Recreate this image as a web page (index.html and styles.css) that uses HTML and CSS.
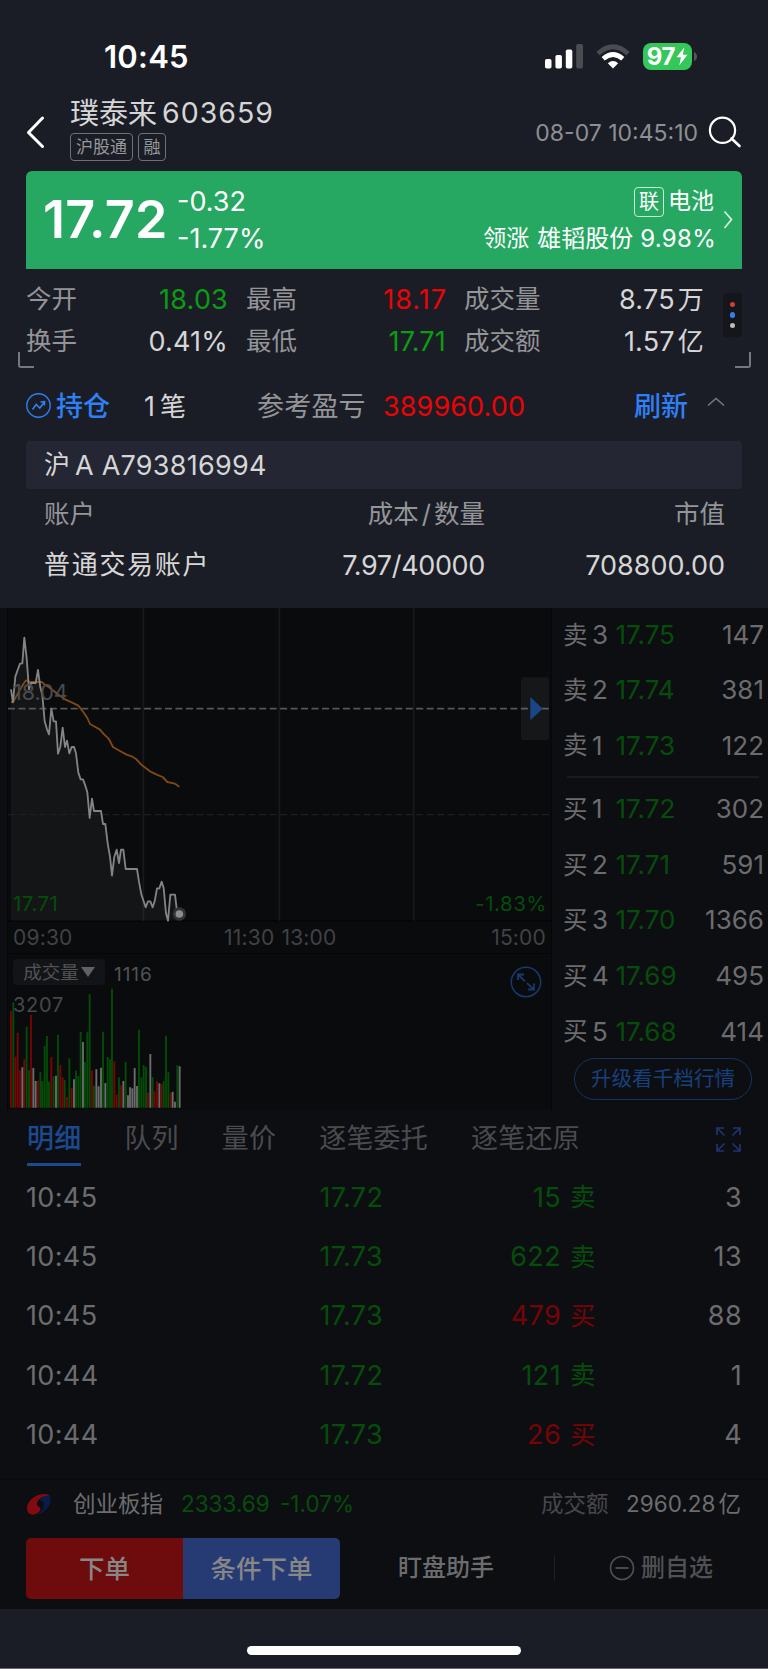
FILE: index.html
```html
<!DOCTYPE html>
<html lang="zh-CN">
<head>
<meta charset="utf-8">
<title>璞泰来 603659</title>
<link rel="stylesheet" href="styles.css">
</head>
<body>
<div class="status">
  <span class="clock">10:45</span>
  <span class="status-icons">
    <svg class="signal" width="38" height="25" viewBox="0 0 38 25"><rect x="0" y="15" width="6.5" height="9.5" rx="1.8" fill="#fff"/><rect x="10.4" y="11" width="6.5" height="13.5" rx="1.8" fill="#fff"/><rect x="20.8" y="5.5" width="6.5" height="19" rx="1.8" fill="#fff"/><rect x="31.2" y="0" width="6.8" height="24.5" rx="1.8" fill="#4b4c52"/></svg>
    <svg class="wifi" width="34" height="25" viewBox="0 0 34 25"><path d="M2 9.5Q17-4 32 9.5" fill="none" stroke="#4b4c52" stroke-width="4.6"/><path d="M7.2 14.8Q17 6.2 26.800 14.800" fill="none" stroke="#fff" stroke-width="4.600"/><path d="M11.800 19.200Q17 14.600 22.200 19.200L17 24.500Z" fill="#fff"/></svg>
    <span class="battery"><span class="level">97</span><svg width="12" height="19" viewBox="0 0 12 19"><path d="M8.200 0.500L0.500 10.200H5L3.200 18.500L11.500 7.800H6.800Z" fill="#fff"/></svg></span>
    <svg class="nub" width="3" height="9" viewBox="0 0 3 9"><path d="M0 0Q3 1.500 3 4.500T0 9Z" fill="#55565c"/></svg>
  </span>
</div>

<header class="head">
  <svg class="back" width="20" height="34" viewBox="0 0 20 34"><path d="M16.500 2L2.500 16.500L16.500 30.500" fill="none" stroke="#fff" stroke-width="3" stroke-linecap="round" stroke-linejoin="round"/></svg>
  <div class="stock">
    <div class="stock-name"><span class="cn">璞泰来</span><span class="code">603659</span></div>
    <div class="tags"><span class="tag wide">沪股通</span><span class="tag">融</span></div>
  </div>
  <span class="stamp">08-07 10:45:10</span>
  <svg class="search" width="34" height="32" viewBox="0 0 34 32"><circle cx="14.500" cy="14.300" r="12.600" fill="none" stroke="#fff" stroke-width="2.200"/><path d="M23.500 22.500L31.500 30" stroke="#fff" stroke-width="2.600" stroke-linecap="round"/></svg>
</header>

<section class="card">
  <span class="last">17.72</span>
  <div class="delta"><span>-0.32</span><span>-1.77%</span></div>
  <div class="sector">
    <div class="sector-top"><span class="lian">联</span><span>电池</span></div>
    <div class="sector-lead"><span class="w1">领涨</span><span class="w2">雄韬股份</span><span class="w3">9.98%</span></div>
  </div>
  <svg class="chev" width="10" height="20" viewBox="0 0 10 20"><path d="M1.500 1.500L8.500 9.500L1.500 18" fill="none" stroke="#d9f1e3" stroke-width="1.700"/></svg>
</section>

<section class="quotes">
  <div class="quote-grid">
    <span class="lab">今开</span><span class="val green">18.03</span><span class="lab">最高</span><span class="val red s17">18.17</span><span class="lab">成交量</span><span class="val">8.75<i class="unit">万</i></span>
    <span class="lab">换手</span><span class="val">0.41%</span><span class="lab">最低</span><span class="val green">17.71</span><span class="lab">成交额</span><span class="val">1.57<i class="unit">亿</i></span>
  </div>
  <div class="dots"><b class="d1"></b><b class="d2"></b><b class="d3"></b></div>
  <span class="corner left"></span><span class="corner right"></span>
</section>

<section class="position">
  <div class="pos-row">
    <svg width="26" height="26" viewBox="0 0 26 26" fill="none" stroke="#2f80f7"><circle cx="12.500" cy="12.500" r="11.700" stroke-width="1.400"/><path d="M6.500 16.500L10.200 11.500L13.800 15L18 9.500M14.500 9L18.600 8.600L18.300 12.500" stroke-width="1.500"/></svg>
    <span class="hold">持仓</span>
    <span class="count">1<i>笔</i></span>
    <span class="pl">参考盈亏</span>
    <span class="pv">389960.00</span>
    <span class="refresh">刷新</span>
    <svg class="up" width="18" height="10" viewBox="0 0 18 10"><path d="M1 8.500L9 1.500L17 8.500" fill="none" stroke="#77787c" stroke-width="1.600"/></svg>
  </div>
  <div class="holder"><span class="cn">沪</span><span>A A793816994</span></div>
  <div class="pos-grid th"><span>账户</span><span class="r c2">成本<i>/</i>数量</span><span class="r">市值</span></div>
  <div class="pos-grid td"><span class="acc">普通交易账户</span><span class="r mid">7.97/40000</span><span class="r num">708800.00</span></div>
</section>

<main class="dim">
  <div class="market">
    <div class="charts">
      <div class="plot">
        <svg class="layer" width="544" height="314" viewBox="24 24 1632 942">
          <g stroke="#181920" stroke-width="5"><path d="M430 24V962M838 24V962M1241 24V962"/></g>
          <path d="M33 268L39 307L46 230L53 210L60 191L67 190L73 113L80 175L87 268L93 249H107L114 210L121 262L127 285L134 364L141 388L147 403L154 326L161 364H168L174 461L181 440L188 383L195 441L201 422L208 460L215 441H222L228 460L235 518L242 538H249L256 557L262 577L269 654L276 596L282 633H303L309 672H316L323 730L330 770L336 827L343 770L350 749L357 789L363 749H370L377 807H411L417 845L424 883L437 922L444 904H451L458 922L464 904L471 865H478L485 845L491 864L498 940L504 962L511 884H525L531 935L538 942V962H33Z" fill="#a0a0a0" fill-opacity=".07"/>
          <path d="M24 326H1652" stroke="#55565a" stroke-width="5" stroke-dasharray="21 10.400" fill="none"/>
          <path d="M24 644H1652" stroke="#1d1e25" stroke-width="4" stroke-dasharray="21 10.400" fill="none"/>
          <path d="M33 307L40 305L55 278L70 252L78 241L90 246H125L135 254L150 264L170 280L195 298L215 307L235 317L250 336L262 354L270 372L300 389L310 401L325 415L332 427L339 441L360 453L380 464L395 469L408 477L425 495L450 514L470 524L488 531L502 546L525 551L538 560" fill="none" stroke="#7d4a13" stroke-width="5.500" stroke-linejoin="round"/>
          <path d="M33 268L39 307L46 230L53 210L60 191L67 190L73 113L80 175L87 268L93 249H107L114 210L121 262L127 285L134 364L141 388L147 403L154 326L161 364H168L174 461L181 440L188 383L195 441L201 422L208 460L215 441H222L228 460L235 518L242 538H249L256 557L262 577L269 654L276 596L282 633H303L309 672H316L323 730L330 770L336 827L343 770L350 749L357 789L363 749H370L377 807H411L417 845L424 883L437 922L444 904H451L458 922L464 904L471 865H478L485 845L491 864L498 940L504 962L511 884H525L531 935L538 942" fill="none" stroke="#848484" stroke-width="5.500" stroke-linejoin="round"/>
          <circle cx="538" cy="942" r="20" fill="#323335"/><circle cx="538" cy="942" r="11.500" fill="#8c8c8c"/>
          <rect x="1563" y="232" width="84" height="188" rx="9" fill="#fff" fill-opacity=".05"/>
          <path d="M1591 291L1628 326L1591 361Z" fill="#1b4585"/>
        </svg>
        <span class="prev">18.04</span>
        <div class="foot"><span class="low">17.71</span><span class="pct">-1.83%</span></div>
      </div>
      <div class="axis"><span class="t1">09:30</span><span class="t2">11:30</span><span class="t3">13:00</span><span class="t4">15:00</span></div>
      <div class="volume">
        <svg class="layer" width="544" height="155" viewBox="24 117 1632 465">
          <g stroke-width="5.600" fill="none">
          <path stroke="#790506" d="M33 578V288M46 578V425M53 578V353M60 578V466M73 578V433M93 578V300M114 578V497M154 578V426M181 578V450M188 578V487M201 578V546M215 578V519M276 578V466M343 578V439M350 578V539M363 578V511M444 578V533M464 578V529M471 578V498M485 578V507M512 578V533"/>
          <path stroke="#044d08" d="M40 578V262M80 578V335M87 578V466M121 578V472M127 578V498M134 578V393M141 578V363M147 578V500M161 578V484M174 578V359M194 578V495M208 578V430M228 578V467M235 578V483M242 578V351M255 578V441M262 578V352M269 578V238M282 578V512M309 578V350M323 578V426M330 578V433M336 578V221M357 578V487M377 578V441M417 578V344M424 578V487M431 578V450M438 578V456M458 578V487M491 578V499M498 578V362M505 578V472M532 578V451"/>
          <path stroke="#6c6c6c" d="M67 578V457M100 578V459M107 578V498M168 578V482M222 578V493M249 578V381M289 578V463M296 578V514M303 578V458M316 578V504M370 578V498M384 578V541M390 578V517M397 578V520M404 578V459M411 578V513M451 578V417M478 578V505M518 578V530M525 578V560M539 578V454"/>
          </g>
        </svg>
        <div class="vol-head">
          <span class="pill">成交量<svg width="14" height="10" viewBox="0 0 14 10"><path d="M0 0H14L7 10Z" fill="#606164"/></svg></span>
          <span class="vol-now">1116</span>
          <svg class="expand" width="32" height="32" viewBox="0 0 32 32" fill="none" stroke="#173a6f"><circle cx="16" cy="16" r="14.700" stroke-width="1.500"/><path d="M8 14V8.500H14M8.500 9L15 15.300M17 17.200L23.500 23.200M24 17.500V23.500H18" stroke-width="1.800"/></svg>
        </div>
        <span class="vol-max">3207</span>
      </div>
    </div>

    <div class="book">
      <div class="lvl"><b>卖</b><i>3</i><em>17.75</em><span>147</span></div>
      <div class="lvl"><b>卖</b><i>2</i><em>17.74</em><span>381</span></div>
      <div class="lvl"><b>卖</b><i>1</i><em>17.73</em><span>122</span></div>
      <div class="rule"></div>
      <div class="lvl"><b>买</b><i>1</i><em>17.72</em><span>302</span></div>
      <div class="lvl"><b>买</b><i>2</i><em>17.71</em><span>591</span></div>
      <div class="lvl"><b>买</b><i>3</i><em>17.70</em><span>1366</span></div>
      <div class="lvl"><b>买</b><i>4</i><em>17.69</em><span>495</span></div>
      <div class="lvl"><b>买</b><i>5</i><em>17.68</em><span>414</span></div>
      <div class="upgrade">升级看千档行情</div>
    </div>
  </div>

  <nav class="tabs">
    <span class="tab on">明细</span><span class="tab">队列</span><span class="tab">量价</span><span class="tab">逐笔委托</span><span class="tab">逐笔还原</span>
    <svg class="full" width="25" height="25" viewBox="0 0 25 25" fill="none" stroke="#1f3470" stroke-width="1.700"><path d="M1 8V1H8M1 1L8.500 8.500M17 1H24V8M24 1L16.500 8.500M1 17V24H8M1 24L8.500 16.500M24 17V24H17M24 24L16.500 16.500"/></svg>
  </nav>
  <div class="ticks">
    <div class="tick"><span>10:45</span><span class="g">17.72</span><span class="g q">15</span><span class="g side">卖</span><span class="n">3</span></div>
    <div class="tick"><span>10:45</span><span class="g">17.73</span><span class="g q">622</span><span class="g side">卖</span><span class="n">13</span></div>
    <div class="tick"><span>10:45</span><span class="g">17.73</span><span class="rd q">479</span><span class="rd side">买</span><span class="n">88</span></div>
    <div class="tick"><span>10:44</span><span class="g">17.72</span><span class="g q">121</span><span class="g side">卖</span><span class="n">1</span></div>
    <div class="tick"><span>10:44</span><span class="g">17.73</span><span class="rd q">26</span><span class="rd side">买</span><span class="n">4</span></div>
  </div>

  <div class="index">
    <svg width="26" height="24" viewBox="0 0 26 24"><path d="M24 3C27 9 21 20 11 21.500C17 18 18 14 18 11C18 7 13 8 14 6C16 3 20 1 24 3Z" fill="#071c4a"/><path d="M24 2.500C17 -1.500 5 3 1.500 12C-.500 19 4 23 9 21.300C14 19.500 16.500 15 12.500 13.500C10 12.500 10.500 9 13 6.500C16 3.200 20 2.500 24 2.500Z" fill="#830a10"/></svg>
    <span class="ix-name">创业板指</span><span class="ix-val">2333.69</span><span class="ix-pct">-1.07%</span><span class="ix-lab">成交额</span><span class="ix-amt">2960.28<i>亿</i></span>
  </div>

  <div class="actions">
    <span class="btn buy">下单</span><span class="btn cond">条件下单</span>
    <span class="watch">盯盘助手</span><span class="sep"></span>
    <span class="remove"><svg width="26" height="26" viewBox="0 0 26 26" fill="none" stroke="#505154"><circle cx="13" cy="13" r="11.500" stroke-width="1.600"/><path d="M6.500 13H19.500" stroke-width="1.800"/></svg>删自选</span>
  </div>
</main>
<footer class="home"><span></span></footer>
</body>
</html>
```
FILE: styles.css
```css
* { box-sizing: border-box; }
body { margin: 0; width: 768px; height: 1669px; overflow: hidden; display: flex; flex-direction: column; background: #1b1d26; color: #d6d6d6; font-family: Inter, "Noto Sans CJK SC", sans-serif; font-size: 27px; line-height: 1; white-space: nowrap; }
i, em, b { font-style: normal; font-weight: 400; }
svg { display: block; flex: none; }
.green { color: #0a9d12; }
.red { color: #ec0303; }

.status { height: 96px; flex: none; padding: 17px 71px 0 104px; display: flex; align-items: center; justify-content: space-between; color: #fff; }
.clock { font-size: 31px; font-weight: 600; letter-spacing: .23px; }
.status-icons { display: flex; align-items: center; }
.wifi { margin-left: 13px; }
.battery { width: 49px; height: 27px; margin-left: 13px; border-radius: 8px; background: #34c759; display: flex; align-items: center; justify-content: center; gap: 1px; }
.level { font-size: 24px; font-weight: 700; letter-spacing: -.2px; }
.nub { margin-left: 2px; }

.head { height: 75px; flex: none; display: flex; padding: 0 26px; }
.back { margin-top: 20px; width: 20px; }
.stock { width: 220px; margin-left: 24px; }
.stock-name { height: 34px; display: flex; align-items: center; font-size: 29px; }
.stock-name .cn { font-size: 29px; width: 92px; }
.code { font-size: 28.5px; letter-spacing: 1px; }
.tags { display: flex; gap: 5px; margin-top: 3px; }
.tag { width: 28px; height: 28px; border: 1px solid #707176; border-radius: 4px; font-size: 17px; line-height: 27px; text-align: center; color: #97989b; }
.tag.wide { width: 63px; }
.stamp { margin: 25px 0 0 auto; font-size: 23px; line-height: 24px; color: #8e8f93; }
.search { margin: 20px 0 0 10px; }

.card { height: 98px; flex: none; margin: 0 26px; padding: 0 9px 0 17px; border-radius: 6px 6px 0 0; background: #27a862; color: #fff; display: flex; align-items: center; }
.last { font-size: 52px; font-weight: 600; letter-spacing: .28px; width: 134px; }
.delta { display: grid; grid-auto-rows: 37px; align-items: center; }
.sector { margin-left: auto; display: flex; flex-direction: column; align-items: flex-end; font-size: 23px; }
.sector > div { height: 37px; display: flex; align-items: center; }
.lian { width: 30px; height: 30px; border: 1px solid #c9ebd8; border-radius: 4px; font-size: 20px; line-height: 28px; text-align: center; margin-right: 4px; }
.sector .sector-lead { margin-right: -2px; }
.w1 { width: 54px; }
.w2 { width: 103px; font-size: 24px; }
.w3 { font-size: 24px; letter-spacing: .3px; }
.chev { margin-left: 9px; }

.quotes { height: 102px; flex: none; position: relative; padding: 9px 26px 0; display: flex; }
.quote-grid { display: grid; grid-template-columns: 52px 150px 68px 150px 100px 158px; grid-auto-rows: 42px; align-items: center; margin-right: 19px; }
.lab { font-size: 25.500px; color: #949598; }
.quote-grid .lab:nth-child(6n+3), .quote-grid .lab:nth-child(6n+5) { padding-left: 18px; }
.val { text-align: right; letter-spacing: .2px; }
.val.s17 { letter-spacing: 1px; margin-right: -1px; }
.unit { font-size: 26px; margin-left: 3px; }
.dots { width: 19px; height: 44px; margin-top: 15px; border-radius: 4px; background: #15161b; display: flex; flex-direction: column; align-items: center; justify-content: center; gap: 5px; }
.dots b { width: 5.500px; height: 5.500px; border-radius: 50%; }
.d1 { background: #d2402e; } .d2 { background: #3480ee; } .d3 { background: #bcbcbc; }
.corner { position: absolute; bottom: 3px; width: 16px; height: 16px; border-bottom: 2px solid #77787d; }
.corner.left { left: 18px; border-left: 2px solid #77787d; border-bottom-left-radius: 3px; }
.corner.right { right: 17px; border-right: 2px solid #77787d; border-bottom-right-radius: 3px; }

.position { height: 237px; flex: none; padding: 0 26px; }
.pos-row { height: 70px; display: flex; align-items: center; }
.hold { color: #2f80f7; font-weight: 500; margin-left: 4px; width: 88px; }
.count { width: 113px; font-size: 27px; }
.count i { font-size: 26px; margin-left: 5px; }
.pl { color: #949598; width: 126px; letter-spacing: .2px; }
.pv { color: #ec0303; letter-spacing: .1px; }
.refresh { color: #2f80f7; font-weight: 500; margin-left: auto; }
.up { margin: -9px 17px 0 19px; }
.holder { height: 48px; padding-left: 18px; background: #242633; border-radius: 4px; display: flex; align-items: center; letter-spacing: .25px; }
.holder .cn { font-size: 26px; width: 31px; }
.pos-grid { display: grid; grid-template-columns: 200px 241px 240px; padding: 0 17px 0 18px; align-items: center; }
.r { text-align: right; }
.th { height: 50px; font-size: 25.500px; color: #949598; }
.th i { padding: 0 3px; }
.td { height: 52px; }
.acc { font-size: 26px; letter-spacing: 1.700px; }
.mid { letter-spacing: -.35px; }

.dim { height: 1001px; flex: none; background: #0d0e12; color: #6c6c6e; display: flex; flex-direction: column; }
.market { height: 502px; flex: none; display: flex; }
.charts { width: 545px; margin-left: 7px; border-left: 1px solid #050608; border-right: 1px solid #050608; background: #0a0b0d; }
.plot, .volume { position: relative; }
.layer { position: absolute; left: 0; top: 0; }
.plot { height: 314px; border-bottom: 2px solid #050608; display: flex; flex-direction: column; justify-content: space-between; padding: 73.500px 4px 4px 5px; }
.plot span, .vol-max { position: relative; }
.prev { font-size: 21.500px; letter-spacing: 0; color: #4a4b4e; }
.foot { display: flex; justify-content: space-between; font-size: 20.500px; line-height: 24px; letter-spacing: .5px; color: #054d0a; }
.axis { height: 32px; border-bottom: 1px solid #050608; padding: 0 5px; display: flex; align-items: center; font-size: 21px; letter-spacing: .2px; color: #414245; }
.t2 { margin-left: 151.500px; }
.t3 { margin-left: 7px; }
.t4 { margin-left: auto; }
.volume { height: 155px; }
.vol-head { position: relative; height: 38px; padding: 5px 9px 0 5px; display: flex; align-items: flex-start; }
.pill { width: 92px; height: 26px; border-radius: 4px; background: #131418; color: #525356; font-size: 18.500px; display: flex; align-items: center; justify-content: center; gap: 2px; }
.vol-now { margin: 6px 0 0 9px; font-size: 19px; letter-spacing: .9px; color: #525356; }
.expand { margin: 7px 0 0 auto; }
.vol-max { display: block; margin: 3px 0 0 5px; font-size: 20px; letter-spacing: .7px; color: #47484a; }

.book { flex: 1; padding: 0 4px 0 11px; font-size: 26px; }
.lvl { height: 55.600px; display: flex; align-items: center; }
.lvl:first-child { height: 54.300px; }
.lvl b { width: 29px; font-size: 24.500px; }
.lvl i { width: 23.500px; }
.lvl em { color: #054d0a; }
.lvl span { margin-left: auto; }
.rule { height: 2px; margin: 3px 5px 3px 4px; background: #191b20; }
.upgrade { width: 178px; height: 42px; margin: -1px 0 0 11px; border: 1px solid #153361; border-radius: 21px; color: #18407a; font-size: 20.600px; line-height: 40px; text-align: center; }

.tabs { height: 57px; flex: none; padding: 0 27px; display: flex; align-items: flex-start; color: #4a4b4e; font-size: 27px; letter-spacing: .2px; }
.tab { height: 56px; line-height: 58px; margin-right: 43px; }
.tab.on { color: #1b4a8f; font-weight: 500; border-bottom: 3px solid #1b4a8f; }
.full { margin: 16.500px 0 0 auto; }
.ticks { height: 312px; flex: none; padding-top: 1px; }
.tick { height: 59.300px; padding: 0 26px; display: grid; grid-template-columns: 293.500px 118.500px 123px 60px 121px; align-items: center; letter-spacing: .36px; border-bottom: 1px solid #0b0c0f; }
.q { text-align: right; }
.side { font-size: 25.500px; padding-left: 9px; }
.n { text-align: right; }
.g { color: #054d0a; }
.rd { color: #760406; }

.index { height: 50px; flex: none; border-top: 1px solid #090a0c; padding: 0 27px 0 26px; display: flex; align-items: center; font-size: 22.500px; }
.ix-name { width: 108px; margin-left: 21px; }
.ix-val { width: 99px; color: #054d0a; }
.ix-pct { color: #054d0a; }
.ix-lab { margin-left: auto; width: 85px; color: #46474a; }
.ix-amt i { margin-left: 3px; }
.actions { height: 80px; flex: none; padding: 9px 26px 11px; display: flex; align-items: center; }
.btn { width: 157px; height: 61px; line-height: 61px; text-align: center; font-size: 25.500px; font-weight: 500; color: #878787; }
.buy { background: #6e0b0d; border-radius: 5px 0 0 5px; }
.cond { background: #263a74; border-radius: 0 5px 5px 0; }
.watch { margin-left: 58px; width: 156px; font-size: 24px; font-weight: 500; }
.sep { width: 1px; height: 24px; background: #202125; }
.remove { margin-left: 54px; display: flex; align-items: center; gap: 6px; font-size: 24px; color: #505154; font-weight: 500; }

.home { flex: 1; display: flex; justify-content: center; padding-top: 37px; border-bottom: 1px solid #6b6870; }
.home span { width: 274px; height: 9px; border-radius: 5px; background: #fff; }
```
